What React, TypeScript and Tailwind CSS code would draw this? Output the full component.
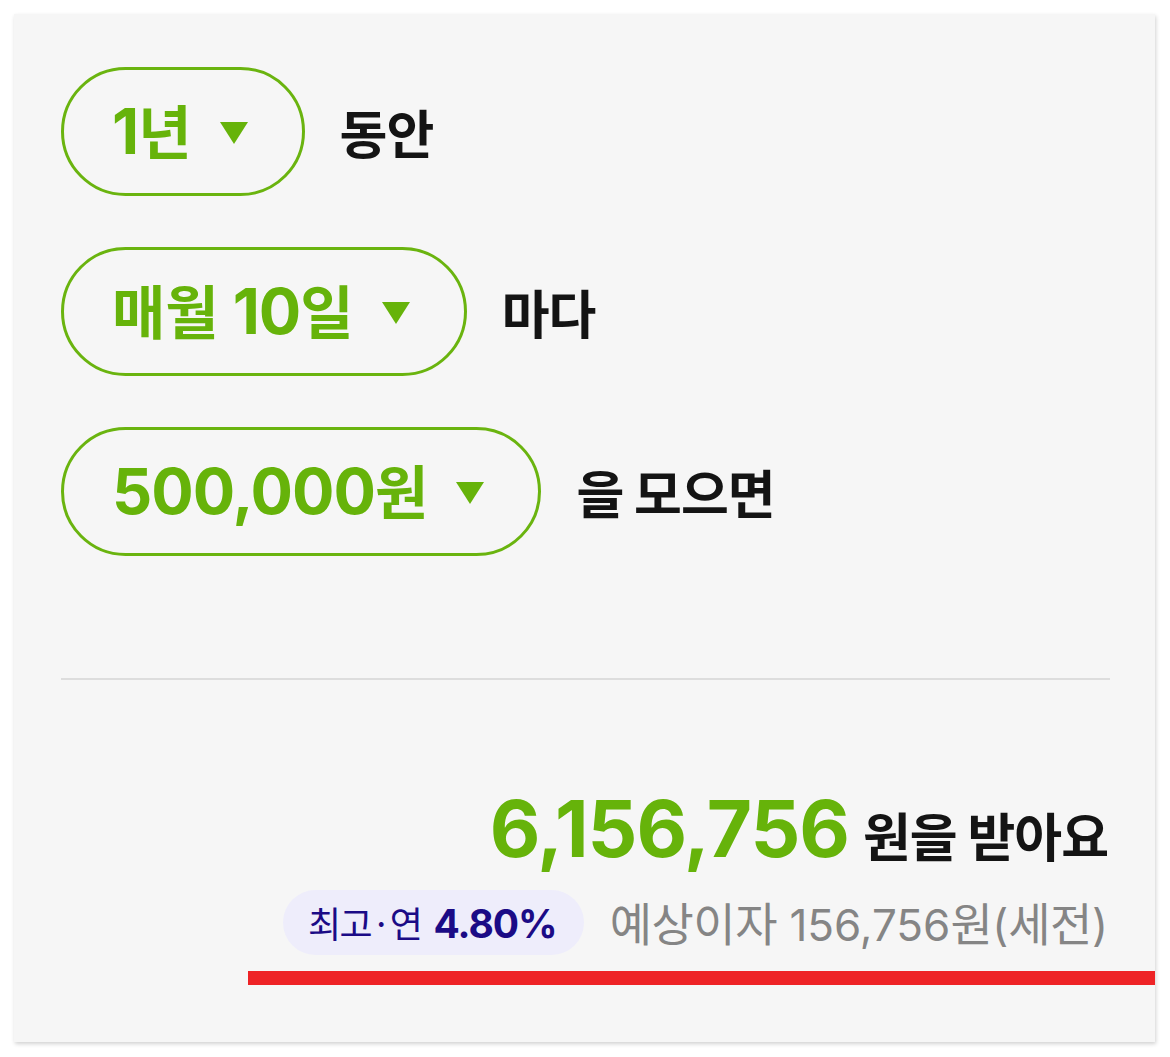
import { ReactNode } from 'react'

const HANGUL = /([\u1100-\u11ff\u3130-\u318f\uac00-\ud7a3·]+(?: [\u1100-\u11ff\u3130-\u318f\uac00-\ud7a3]+)*)/

// Latin runs use Inter, hangul runs use Noto CJK at their own size (Pretendard-like mix)
function Mixed({ text, latin, hangul }: { text: string; latin: string; hangul: string }) {
  const parts = text.split(HANGUL).filter(Boolean)
  return (
    <>
      {parts.map((p, i) =>
        HANGUL.test(p)
          ? <span key={i} className={hangul}>{p}</span>
          : <span key={i} className={latin}>{p}</span>
      )}
    </>
  )
}

const latinBold = "font-[Inter,'Noto_Sans_CJK_KR',sans-serif] text-[63px] font-bold tracking-[-1px] whitespace-pre"
const hangulBold = "font-['Noto_Sans_CJK_KR',sans-serif] text-[58px] font-bold"

function Pill({ children }: { children: ReactNode }) {
  return (
    <div className="flex h-[129px] items-center gap-[27px] rounded-full border-[3px] border-[#6ab40f] pl-[48px] pr-[53px]">
      <span className="block leading-none whitespace-pre text-[#66b30a]">{children}</span>
      <svg width="30" height="24" viewBox="0 0 30 24" className="mt-[2px]">
        <path d="M1 1 H29 L15 23 Z" fill="#66b30a" />
      </svg>
    </div>
  )
}

function Row({ value, label }: { value: string; label: string }) {
  return (
    <div className="flex items-center gap-[35px]">
      <Pill>
        <Mixed text={value} latin={latinBold} hangul={hangulBold} />
      </Pill>
      <span className="text-[52px] leading-none font-bold tracking-[-1px] text-[#141414]">{label}</span>
    </div>
  )
}

export default function App() {
  return (
    <div className="min-h-[1057px] bg-white pt-[14px] pl-[14px] font-['Noto_Sans_CJK_KR',sans-serif]">
      <div className="flex h-[1028px] w-[1141px] flex-col bg-[#f6f6f6] pt-[53px] pl-[47px] shadow-[1px_2px_4px_rgba(0,0,0,0.18)]">
        <div className="flex flex-col gap-[51px]">
          <Row value="1년" label="동안" />
          <Row value="매월 10일" label="마다" />
          <Row value="500,000원" label="을 모으면" />
        </div>

        <div className="mt-[122px] mr-[45px] h-[2px] bg-[#dddddd]" />

        <div className="mt-[110px] mr-[47px] flex items-baseline justify-end gap-[14px] leading-none">
          <span className="font-[Inter,sans-serif] text-[78px] font-bold tracking-[-1px] text-[#66b30a]">6,156,756</span>
          <span className="text-[52px] font-bold tracking-[-1px] text-[#141414]">원을 받아요</span>
        </div>

        <div className="mt-[22px] mr-[47px] flex items-center justify-end gap-[26px]">
          <div className="flex h-[65px] items-baseline gap-[12px] rounded-full bg-[#eeedfb] pt-[14px] pr-[27px] pl-[25px] leading-none text-[#1b0b86]">
            <span className="text-[36px] tracking-[-1.5px]">최고·연</span>
            <span className="font-[Inter,sans-serif] text-[39px] font-bold tracking-[-1px]">4.80%</span>
          </div>
          <span className="block leading-none whitespace-pre text-[#858585]">
            <Mixed
              text="예상이자 156,756원(세전)"
              latin="font-[Inter,'Noto_Sans_CJK_KR',sans-serif] text-[44px] whitespace-pre"
              hangul="font-['Noto_Sans_CJK_KR',sans-serif] text-[46px] tracking-[-0.5px]"
            />
          </span>
        </div>

        <div className="mt-[16px] ml-[187px] h-[14px] bg-[#ee2326]" />
      </div>
    </div>
  )
}
